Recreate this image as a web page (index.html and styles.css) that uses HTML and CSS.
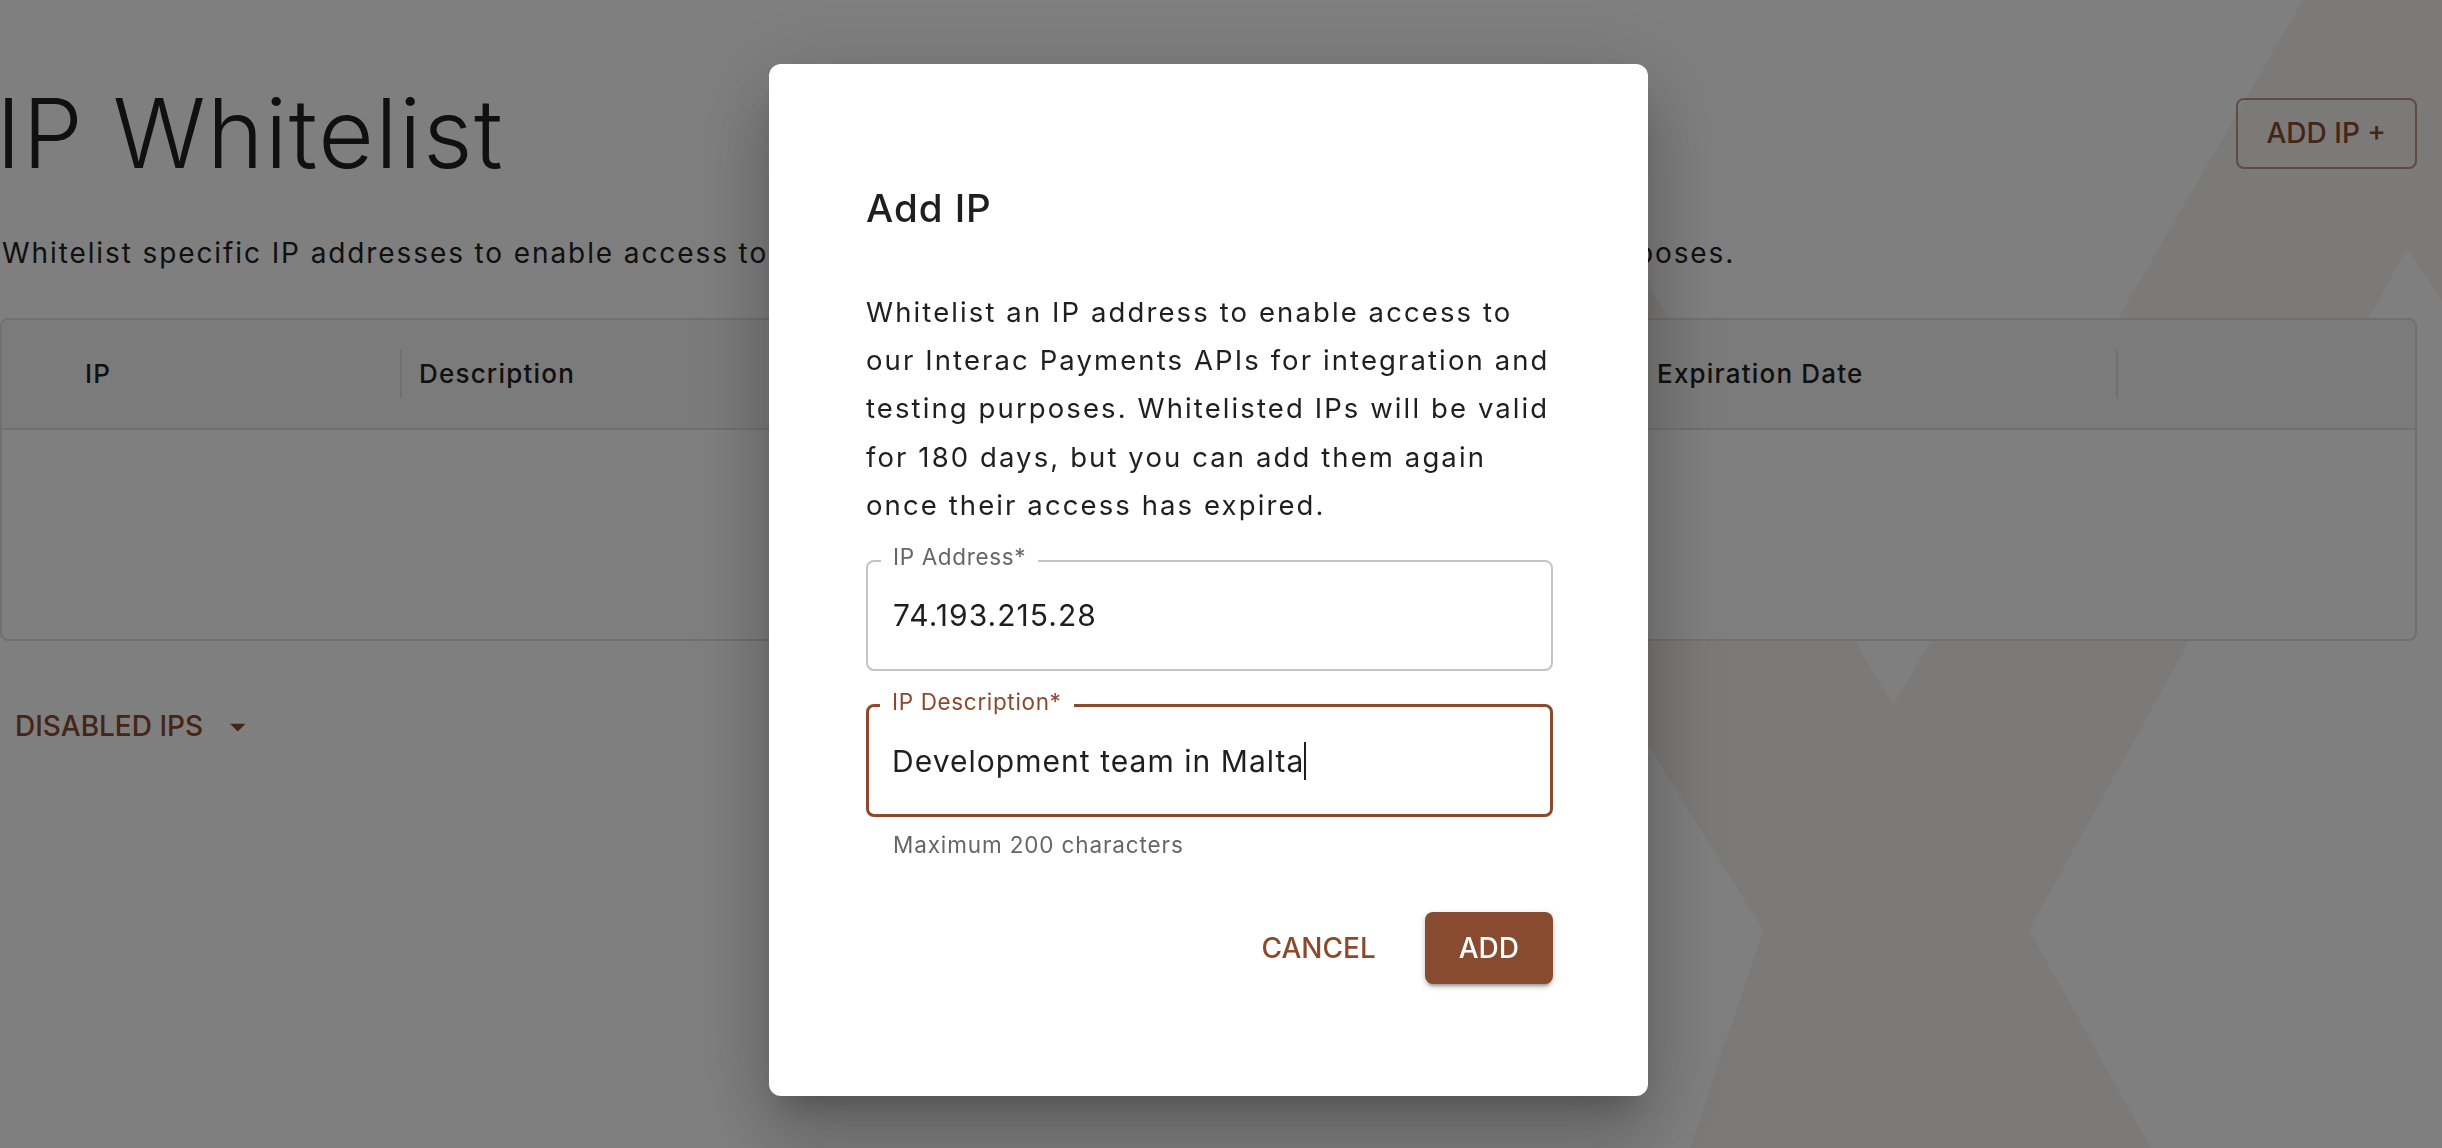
FILE: index.html
```html
<!DOCTYPE html>
<html lang="en">
<head>
<meta charset="utf-8">
<title>IP Whitelist</title>
<link rel="stylesheet" href="styles.css">
</head>
<body>
<svg class="watermark" viewBox="0 0 2442 1148" aria-hidden="true">
  <polygon class="watermark-shape" points="1600,200 1893,706 2303,0 2442,0 2442,300 2407,249 2029,930 2151,1148 1690,1148 1763,930 1640,732 1500,500"/>
</svg>
<main class="page">
  <header class="page-header">
    <h1 class="page-title">IP Whitelist</h1>
    <button class="btn-outlined" type="button">ADD IP +</button>
  </header>
  <p class="page-subtitle">Whitelist specific IP addresses to enable access to our Interac Payments APIs for integration and testing purposes.</p>
  <section class="grid">
    <div class="grid-head">
      <div class="col col-ip">IP</div>
      <span class="sep"></span>
      <div class="col col-desc">Description</div>
      <span class="sep"></span>
      <div class="col col-exp">Expiration Date</div>
      <span class="sep"></span>
      <div class="col col-actions"></div>
    </div>
    <div class="grid-body"></div>
  </section>
  <button class="toggle" type="button">DISABLED IPS
    <svg class="toggle-icon" viewBox="0 0 24 24" aria-hidden="true"><path d="m7 10 5 5 5-5z"/></svg>
  </button>
</main>
<div class="backdrop">
  <div class="dialog" role="dialog" aria-labelledby="dlg-title">
    <h2 class="dialog-title" id="dlg-title">Add IP</h2>
    <p class="dialog-text">Whitelist an IP address to enable access to our Interac Payments APIs for integration and testing purposes. Whitelisted IPs will be valid for 180 days, but you can add them again once their access has expired.</p>
    <fieldset class="field">
      <legend>IP Address*</legend>
      <div class="field-value">74.193.215.28</div>
    </fieldset>
    <fieldset class="field field-focused">
      <legend>IP Description*</legend>
      <div class="field-value">Development team in Malta<span class="caret"></span></div>
    </fieldset>
    <p class="helper">Maximum 200 characters</p>
    <div class="dialog-actions">
      <button class="btn-text" type="button">CANCEL</button>
      <button class="btn-contained" type="button">ADD</button>
    </div>
  </div>
</div>
</body>
</html>
```

FILE: styles.css
```css
* { box-sizing: border-box; }

html, body { margin: 0; }

body {
  position: relative;
  width: 2442px;
  height: 1148px;
  overflow: hidden;
  background: #ffffff;
  color: #212121;
  font-family: Inter, "Noto Sans", "Liberation Sans", sans-serif;
}

button { font-family: inherit; cursor: pointer; }

/* faint brand watermark behind the page */
.watermark {
  position: absolute;
  left: 0;
  top: 0;
  width: 2442px;
  height: 1148px;
  z-index: 0;
}
.watermark-shape { fill: #f7f4f1; }

.page {
  position: relative;
  z-index: 1;
  padding: 77px 25px 0 0;
}

.page-header {
  display: flex;
  justify-content: space-between;
  align-items: center;
}

.page-title {
  margin: 0 0 0 -4px;
  font-size: 96px;
  font-weight: 300;
  line-height: 112px;
  letter-spacing: 1.45px;
}

.btn-outlined {
  font-size: 28px;
  font-weight: 500;
  line-height: 49px;
  letter-spacing: 0;
  color: #8b4a2e;
  background: transparent;
  border: 2px solid rgba(139, 74, 46, 0.55);
  border-radius: 8px;
  padding: 9px 29px;
}

.page-subtitle {
  margin: 43px 0 0 2px;
  font-size: 28px;
  line-height: 42px;
  letter-spacing: 1.9px;
  white-space: nowrap;
}

.grid {
  margin-top: 44px;
  border: 2px solid #e0e0e0;
  border-radius: 8px;
  background: #ffffff;
  overflow: hidden;
}

.grid-head {
  display: flex;
  align-items: center;
  height: 110px;
  background: #f7f7f7;
  border-bottom: 2px solid #e0e0e0;
}

.col {
  flex: none;
  font-size: 26px;
  font-weight: 500;
  line-height: 1;
  letter-spacing: 1.2px;
  padding-left: 17px;
}
.col-ip { width: 398px; padding-left: 83px; }
.col-desc { width: 1236px; }
.col-exp { width: 476px; }
.col-actions { flex: 1; }

.sep {
  flex: none;
  width: 2px;
  height: 48px;
  background: #e0e0e0;
}

.grid-body { height: 209px; }

.toggle {
  display: inline-flex;
  align-items: center;
  margin-top: 48px;
  padding: 13px 15px;
  border: 0;
  background: none;
  color: #8b4a2e;
  font-size: 28px;
  font-weight: 500;
  line-height: 49px;
  letter-spacing: 0;
}
.toggle-icon {
  width: 37.5px;
  height: 37.5px;
  margin-left: 16px;
  fill: currentColor;
}

/* Modal */
.backdrop {
  position: fixed;
  inset: 0;
  z-index: 10;
  background: rgba(0, 0, 0, 0.5);
  display: flex;
  align-items: center;
  justify-content: center;
  padding: 12px 25px 0 0;
}

.dialog {
  width: 879px;
  background: #ffffff;
  border-radius: 12px;
  padding: 114px 95px 112px 97px;
  box-shadow:
    0 20px 28px -13px rgba(0, 0, 0, 0.2),
    0 45px 70px 6px rgba(0, 0, 0, 0.14),
    0 17px 86px 15px rgba(0, 0, 0, 0.12);
}

.dialog-title {
  margin: 0;
  font-size: 38.5px;
  font-weight: 500;
  line-height: 60px;
  letter-spacing: 0.95px;
  color: #1f1f1f;
}

.dialog-text {
  margin: 50px 0 0;
  font-size: 27.5px;
  line-height: 48.3px;
  letter-spacing: 2.1px;
  color: #1f1f1f;
}

.field {
  margin: 17px 0 0;
  min-width: 0;
  padding: 22px 0 36px 25px;
  border: 2px solid #c4c4c4;
  border-radius: 8px;
}
.field legend {
  margin-left: -12px;
  padding: 0 12px 6px;
  font-size: 22.5px;
  line-height: 1;
  letter-spacing: 0.65px;
  color: #666666;
}
.field-value {
  font-size: 30px;
  line-height: 36px;
  letter-spacing: 1.04px;
  color: #1f1f1f;
}
.field-focused {
  margin-top: 20.5px;
  padding: 22px 0 34px 23px;
  border: 3px solid #8b4a2e;
}
.field-focused legend { color: #8b4a2e; }

.caret {
  display: inline-block;
  width: 2px;
  height: 38px;
  background: #1f1f1f;
  vertical-align: -8px;
}

.helper {
  margin: 9px 0 0 27px;
  font-size: 22.5px;
  line-height: 37.4px;
  letter-spacing: 0.87px;
  color: #666666;
}

.dialog-actions {
  display: flex;
  justify-content: flex-end;
  gap: 15px;
  margin-top: 49px;
}

.btn-text,
.btn-contained {
  height: 72px;
  padding: 0 34px;
  border: 0;
  border-radius: 8px;
  font-size: 28px;
  font-weight: 500;
  line-height: 1;
  letter-spacing: 0;
}
.btn-text {
  background: none;
  color: #8b4a2e;
}
.btn-contained {
  background: #884b2f;
  color: #ffffff;
  box-shadow:
    0 5px 2px -3px rgba(0, 0, 0, 0.2),
    0 3px 4px 0 rgba(0, 0, 0, 0.14),
    0 2px 8px 0 rgba(0, 0, 0, 0.12);
}
```
